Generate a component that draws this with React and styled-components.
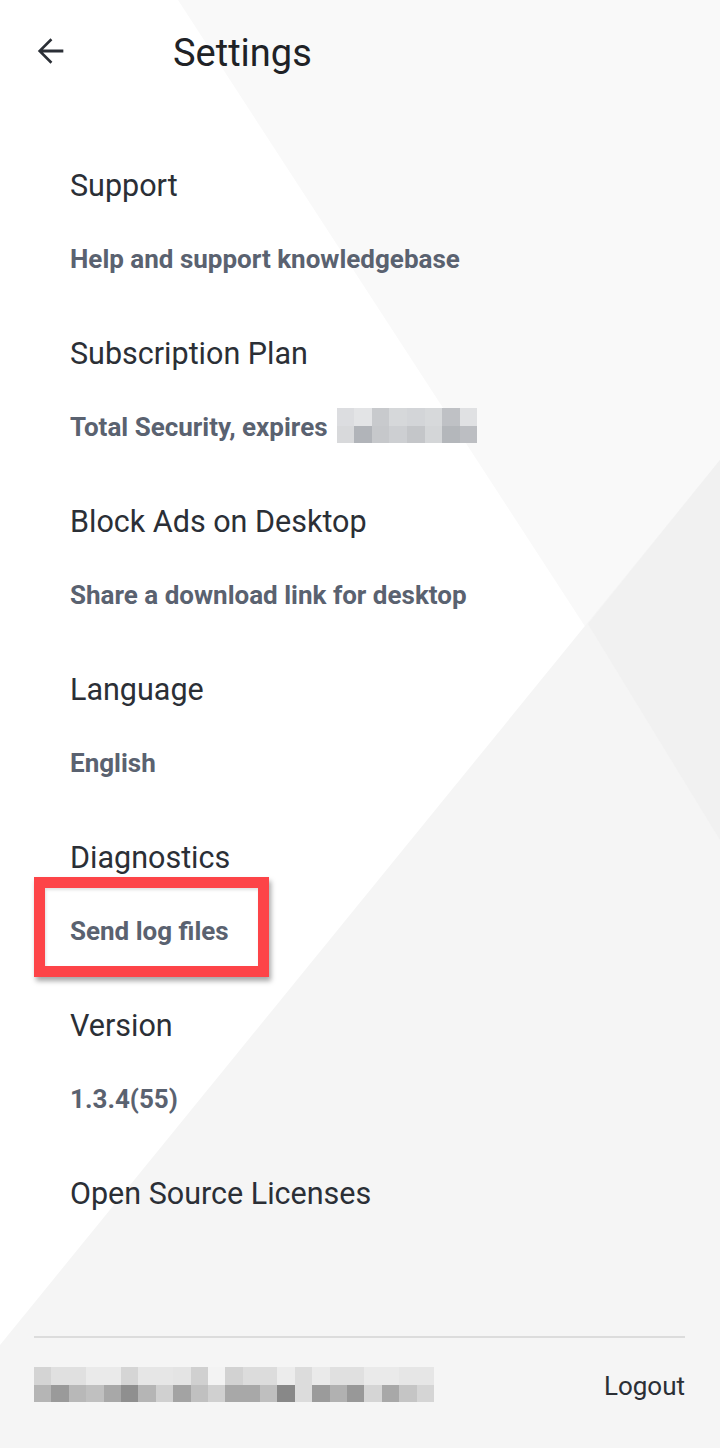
import React from "react";
import styled, { createGlobalStyle } from "styled-components";

const GlobalStyle = createGlobalStyle`
  html, body { margin: 0; padding: 0; background: #ffffff; }
  body { font-family: Roboto, "Noto Sans", Arial, sans-serif; -webkit-font-smoothing: antialiased; }
  *, *::before, *::after { box-sizing: border-box; }
`;

const Page = styled.div`
  position: relative;
  width: 720px;
  height: 1448px;
  overflow: hidden;
  display: flex;
  flex-direction: column;
  background: #ffffff;
`;

const Backdrop = styled.svg`
  position: absolute;
  inset: 0;
  width: 100%;
  height: 100%;
  z-index: 0;
`;

const Content = styled.div`
  position: relative;
  z-index: 1;
  flex: 1;
  display: flex;
  flex-direction: column;
`;

const Header = styled.header`
  display: flex;
  align-items: center;
  height: 100px;
  padding: 2px 0 0 30px;
`;

const BackButton = styled.button`
  display: flex;
  align-items: center;
  justify-content: center;
  width: 40px;
  height: 40px;
  padding: 0;
  border: none;
  background: transparent;
  color: #2b2f36;
  cursor: pointer;
`;

const Title = styled.h1`
  margin: 4px 0 0 103px;
  font-size: 38px;
  font-weight: 400;
  line-height: 44px;
  color: #202226;
`;

const List = styled.div`
  display: flex;
  flex-direction: column;
  gap: 62px;
  padding: 68px 0 0 70px;
`;

const Item = styled.div`
  display: flex;
  flex-direction: column;
  gap: 40px;
`;

const ItemTitle = styled.div`
  font-size: 30.5px;
  font-weight: 400;
  line-height: 36px;
  color: #2b2f36;
`;

const ItemValue = styled.div`
  position: relative;
  align-self: flex-start;
  height: 30px;
  font-size: 26px;
  font-weight: 700;
  line-height: 30px;
  color: #5a6270;
  display: flex;
  align-items: center;
  gap: 9px;

  ${(p) =>
    p.$highlight &&
    `
    &::before {
      content: "";
      position: absolute;
      left: -36px;
      top: -39px;
      width: 235px;
      height: 100px;
      border: 11px solid #fd4448;
      box-shadow: 2px 4px 5px rgba(0, 0, 0, 0.35), inset 1px 2px 3px rgba(0,0,0,0.12);
    }
  `}
`;

const Mosaic = styled.span`
  display: inline-grid;
  flex-shrink: 0;
  grid-template-columns: repeat(${(p) => p.$cols}, ${(p) => p.$cell}px);
  grid-auto-rows: ${(p) => p.$rowH}px;
  margin-top: ${(p) => p.$shift || 0}px;
`;

const Cell = styled.span`
  display: block;
  background: ${(p) => p.$c};
`;

const Spacer = styled.div`
  flex: 1;
`;

const Footer = styled.footer`
  display: flex;
  flex-direction: column;
  padding: 0 35px 0 34px;
  height: 112px;
`;

const Divider = styled.div`
  height: 2px;
  background: #dcdcdc;
`;

const FooterRow = styled.div`
  display: flex;
  align-items: center;
  justify-content: space-between;
  margin-top: 29px;
`;

const Logout = styled.button`
  border: none;
  background: transparent;
  padding: 0;
  margin-top: 3px;
  font-family: Roboto, "Noto Sans", Arial, sans-serif;
  font-size: 26px;
  font-weight: 400;
  color: #2b2f36;
  cursor: pointer;
`;

const expiresTop = ["#dcdde0", "#e3e4e6", "#c8cacd", "#d6d8da", "#d3d5d8", "#d7d9db", "#bfc1c5", "#e0e1e3"];
const expiresBottom = ["#d8d9db", "#b1b4b9", "#c6c8cb", "#cdcfd2", "#c4c6c9", "#d4d6d8", "#b4b7bb", "#bcbec2"];

const nameTop = ["#d4d4d4", "#e0e0e0", "#e0e0e0", "#eaeaea", "#eaeaea", "#d5d5d5", "#e6e6e6", "#e6e6e6", "#e4e4e4", "#d0d0d0", "#f3f3f3", "#d2d2d2", "#dcdcdc", "#dcdcdc", "#ececec", "#dcdcdc", "#eaeaea", "#e0e0e0", "#e0e0e0", "#eaeaea", "#eaeaea", "#e6e6e6", "#e6e6e6"];
const nameBottom = ["#b5b5b5", "#9a9a9a", "#b8b8b8", "#c0c0c0", "#a8a8a8", "#8f8f8f", "#b5b5b5", "#d0d0d0", "#a3a3a3", "#c0c0c0", "#d0d0d0", "#a8a8a8", "#a8a8a8", "#bfbfbf", "#888888", "#dcdcdc", "#9b9b9b", "#b1b1b1", "#989898", "#d5d5d5", "#a8a8a8", "#c5c5c5", "#d5d5d5"];

function Pixelated({ top, bottom, cell, rowH, shift }) {
  return (
    <Mosaic $cols={top.length} $cell={cell} $rowH={rowH} $shift={shift} aria-hidden="true">
      {top.map((c, i) => <Cell key={"t" + i} $c={c} />)}
      {bottom.map((c, i) => <Cell key={"b" + i} $c={c} />)}
    </Mosaic>
  );
}

const items = [
  { title: "Support", value: "Help and support knowledgebase" },
  { title: "Subscription Plan", value: "Total Security, expires", blurred: true },
  { title: "Block Ads on Desktop", value: "Share a download link for desktop" },
  { title: "Language", value: "English" },
  { title: "Diagnostics", value: "Send log files", highlight: true },
  { title: "Version", value: "1.3.4(55)" },
  { title: "Open Source Licenses" },
];

export default function App() {
  return (
    <>
      <GlobalStyle />
      <Page>
        <Backdrop viewBox="0 0 720 1448" preserveAspectRatio="none" aria-hidden="true">
          <polygon points="178,0 720,0 720,840 586,628" fill="#f9f9f9" />
          <polygon points="720,460 720,1448 0,1448 0,1345" fill="#f5f5f5" />
          <polygon points="720,460 720,840 588,624" fill="#f1f1f1" />
        </Backdrop>
        <Content>
          <Header>
            <BackButton aria-label="Back">
              <svg width="40" height="40" viewBox="0 0 24 24" fill="currentColor">
                <path d="M20 11.1H7.83l5.59-5.59L12.3 4.4 4.7 12l7.6 7.6 1.12-1.11-5.59-5.59H20z" />
              </svg>
            </BackButton>
            <Title>Settings</Title>
          </Header>
          <List>
            {items.map((it) => (
              <Item key={it.title}>
                <ItemTitle>{it.title}</ItemTitle>
                {it.value && (
                  <ItemValue $highlight={it.highlight}>
                    {it.value}
                    {it.blurred && (
                      <Pixelated top={expiresTop} bottom={expiresBottom} cell={17.6} rowH={17.5} shift={-3} />
                    )}
                  </ItemValue>
                )}
              </Item>
            ))}
          </List>
          <Spacer />
          <Footer>
            <Divider />
            <FooterRow>
              <Pixelated top={nameTop} bottom={nameBottom} cell={17.4} rowH={17.5} />
              <Logout>Logout</Logout>
            </FooterRow>
          </Footer>
        </Content>
      </Page>
    </>
  );
}
